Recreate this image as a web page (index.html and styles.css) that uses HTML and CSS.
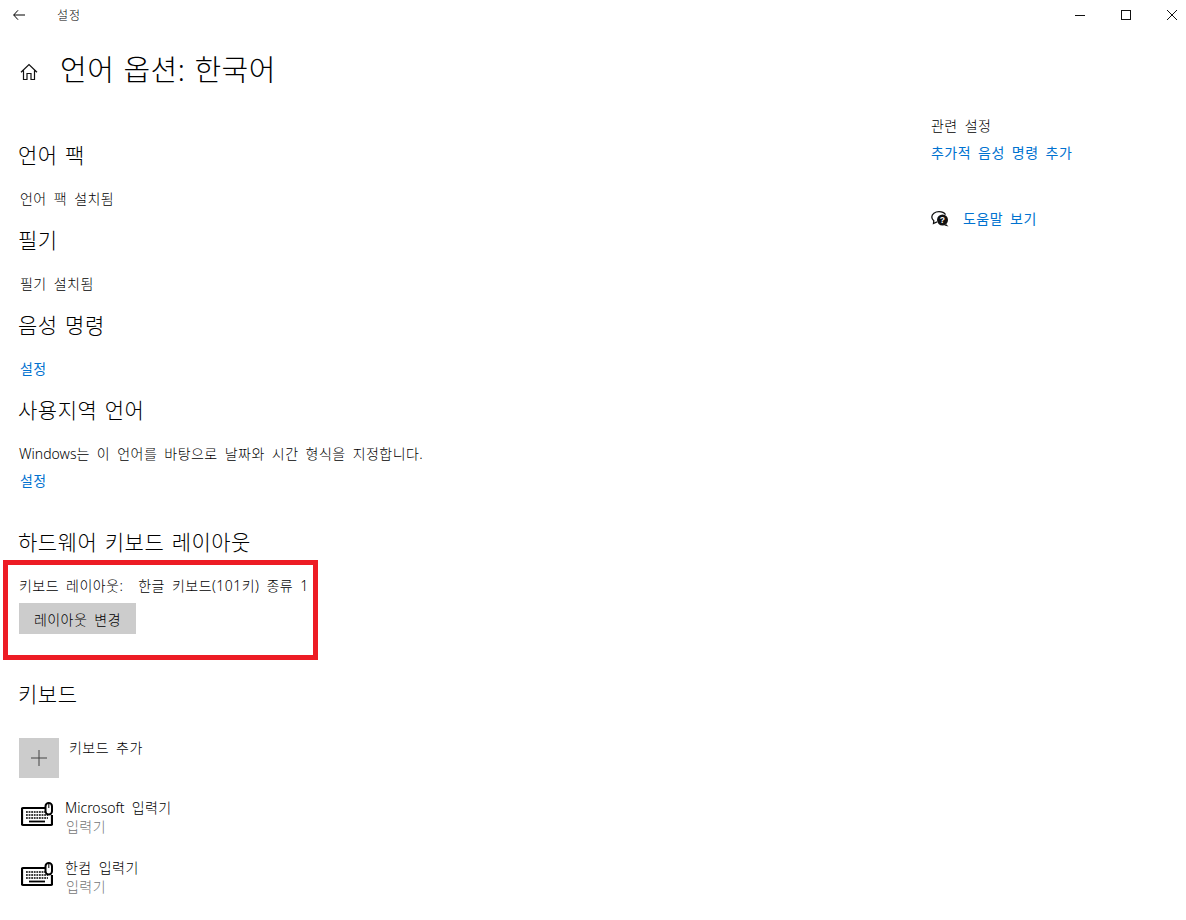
FILE: index.html
```html
<!DOCTYPE html>
<html lang="ko">
<head>
    <meta charset="UTF-8">
    <meta name="viewport" content="width=device-width, initial-scale=1.0">
    <title>설정</title>
    <link rel="stylesheet" href="styles.css">
</head>
<body>
    <div class="title-bar">
        <svg class="back-icon" width="12" height="10" viewBox="0 0 12 10"><path d="M5 .3 .7 5 5 9.700M.7 5H12" fill="none" stroke="#000" stroke-width="1"/></svg>
        <span class="app-name">설정</span>
        <div class="window-buttons">
            <svg width="10" height="10" viewBox="0 0 10 10"><path d="M0 5.500H10" stroke="#111" stroke-width="1"/></svg>
            <svg width="10" height="10" viewBox="0 0 10 10"><rect x=".5" y=".5" width="9" height="9" fill="none" stroke="#111" stroke-width="1"/></svg>
            <svg width="10" height="10" viewBox="0 0 10 10"><path d="M0 0 10 10M10 0 0 10" stroke="#111" stroke-width="1"/></svg>
        </div>
    </div>

    <div class="page-title">
        <svg class="home-icon" width="18" height="18" viewBox="0 0 18 18"><path d="M1 9.200 9 1.600l8 7.600M3.500 7.400V16.500H7V10.500h4v6h3.500V7.400" fill="none" stroke="#111" stroke-width="1.200"/></svg>
        <h1>언어 옵션: 한국어</h1>
    </div>

    <div class="layout">
        <main class="main-col">
            <h2>언어 팩</h2>
            <p class="line">언어 팩 설치됨</p>
            <h2>필기</h2>
            <p class="line">필기 설치됨</p>
            <h2>음성 명령</h2>
            <p class="line"><a href="#">설정</a></p>
            <h2>사용지역 언어</h2>
            <p class="line region-text"><span class="latin">Windows</span>는 이 언어를 바탕으로 날짜와 시간 형식을 지정합니다.</p>
            <p class="line region-link"><a href="#">설정</a></p>

            <h2 class="hw-heading">하드웨어 키보드 레이아웃</h2>
            <p class="line layout-line"><span class="layout-label">키보드 레이아웃:</span><span>한글 키보드(101키) 종류 1</span></p>
            <button class="change-btn">레이아웃 변경</button>

            <h2 class="kb-heading">키보드</h2>
            <div class="add-row">
                <div class="add-tile">
                    <svg width="16" height="16" viewBox="0 0 16 16"><path d="M8 0V16M0 8H16" stroke="#444" stroke-width="1"/></svg>
                </div>
                <span class="add-label">키보드 추가</span>
            </div>
            <div class="ime-row">
                <svg class="kb-icon" width="32" height="25" viewBox="0 0 32 25"><use href="#kb"/></svg>
                <div>
                    <div class="ime-name"><span class="latin">Microsoft</span> 입력기</div>
                    <div class="ime-sub">입력기</div>
                </div>
            </div>
            <div class="ime-row">
                <svg class="kb-icon" width="32" height="25" viewBox="0 0 32 25"><use href="#kb"/></svg>
                <div>
                    <div class="ime-name">한컴 입력기</div>
                    <div class="ime-sub">입력기</div>
                </div>
            </div>
        </main>

        <aside class="side-col">
            <div class="side-title">관련 설정</div>
            <a class="side-link" href="#">추가적 음성 명령 추가</a>
            <div class="help-row">
                <svg width="18" height="16" viewBox="0 0 18 16">
                    <path d="M8 .7C4 .7 .8 3 .8 6c0 1.500.8 2.800 2 3.800L2.500 12.500 6 10.900" fill="none" stroke="#111" stroke-width="1.300"/>
                    <path d="M8 .7c3 0 5.400 1.200 6.500 3" fill="none" stroke="#111" stroke-width="1.300"/>
                    <circle cx="11.500" cy="9" r="5.500" fill="#111"/>
                    <path d="M15 13l2.500 2.500-4-1z" fill="#111"/>
                    <text x="11.500" y="12" font-size="8.500" font-weight="700" fill="#fff" text-anchor="middle" font-family="Liberation Sans">?</text>
                </svg>
                <a href="#">도움말 보기</a>
            </div>
        </aside>
    </div>

    <div class="red-box"></div>

    <svg class="defs" width="0" height="0">
        <defs>
            <g id="kb">
                <path d="M24 6H2.200A1.200 1.200 0 0 0 1 7.200v14.600A1.200 1.200 0 0 0 2.200 23h27.600a1.200 1.200 0 0 0 1.200-1.200V13" fill="none" stroke="#000" stroke-width="2.200"/>
                <rect x="24.500" y="1" width="6.500" height="11.500" rx="3.200" fill="#fff" stroke="#000" stroke-width="2"/>
                <path d="M27.800 2v4" stroke="#000" stroke-width="1"/>
                <path d="M5 10h19M5 13h22M5 16h22" stroke="#000" stroke-width="1.700" stroke-dasharray="1.800 .8"/>
                <path d="M8 19.500h16" stroke="#000" stroke-width="1.800"/>
            </g>
        </defs>
    </svg>
</body>
</html>
```
FILE: styles.css
```css
* {
    box-sizing: border-box;
}

body {
    margin: 0;
    width: 1186px;
    height: 920px;
    overflow: hidden;
    position: relative;
    background-color: #fff;
    color: #000;
    font-family: "Noto Sans", "Noto Sans CJK KR", sans-serif;
    font-size: 14px;
    font-weight: 300;
    letter-spacing: .45px;
    word-spacing: 3px;
}

a {
    color: #0072d0;
    font-weight: 400;
    text-decoration: none;
}

.latin {
    letter-spacing: 0;
}

.title-bar {
    display: flex;
    align-items: center;
    height: 30px;
    padding-left: 13px;
}

.app-name {
    margin-left: 32px;
    font-size: 12px;
    letter-spacing: 1px;
}

.window-buttons {
    display: flex;
    gap: 36px;
    margin-left: auto;
    margin-right: 9px;
}

.page-title {
    display: flex;
    align-items: center;
    height: 40px;
    margin-top: 20px;
    padding-left: 20px;
}

.home-icon {
    margin-top: 4px;
}

h1 {
    margin: 0 0 0 22px;
    font-size: 29px;
    font-weight: 300;
    line-height: 40px;
    letter-spacing: .5px;
    word-spacing: 1px;
}

.layout {
    display: flex;
}

.main-col {
    width: 931px;
    padding-left: 19px;
}

h2 {
    margin: 0;
    font-size: 21px;
    font-weight: 300;
    line-height: 26px;
    margin-left: -1px;
    letter-spacing: .5px;
    word-spacing: 1.5px;
}

.main-col > h2:first-child {
    margin-top: 52px;
}

.line {
    margin: 21px 0 18px;
    padding-left: 1px;
    line-height: 20px;
}

.region-text {
    margin-bottom: 7px;
    padding-left: 0;
}

.region-link {
    margin: 0;
}

.hw-heading {
    margin-top: 38px;
}

.layout-line {
    margin: 21px 0 7px;
    padding-left: 0;
}

.layout-label {
    margin-right: 15px;
}

.change-btn {
    display: block;
    width: 117px;
    height: 31px;
    border: none;
    padding: 0;
    background-color: #ccc;
    color: #000;
    font: inherit;
    letter-spacing: inherit;
    word-spacing: inherit;
}

.kb-heading {
    margin-top: 47px;
}

.add-row {
    display: flex;
    gap: 10px;
    margin-top: 31px;
}

.add-tile {
    display: flex;
    align-items: center;
    justify-content: center;
    width: 40px;
    height: 40px;
    background-color: #ccc;
}

.add-label {
    line-height: 20px;
}

.ime-row {
    display: flex;
    gap: 12px;
    height: 40px;
    margin-top: 20px;
}

.kb-icon {
    margin: 4px 0 0 2px;
}

.ime-name {
    line-height: 20px;
}

.ime-sub {
    padding-left: 1px;
    color: #767676;
    line-height: 18px;
}

.side-col {
    padding-top: 26px;
}

.side-title {
    line-height: 20px;
}

.side-link {
    display: block;
    margin-top: 7px;
    line-height: 20px;
}

.help-row {
    display: flex;
    align-items: center;
    gap: 14px;
    margin-top: 46px;
    line-height: 20px;
}

.red-box {
    position: absolute;
    left: 3px;
    top: 560px;
    width: 315px;
    height: 100px;
    border: 5px solid #ed1c24;
}

.defs {
    position: absolute;
}
```
